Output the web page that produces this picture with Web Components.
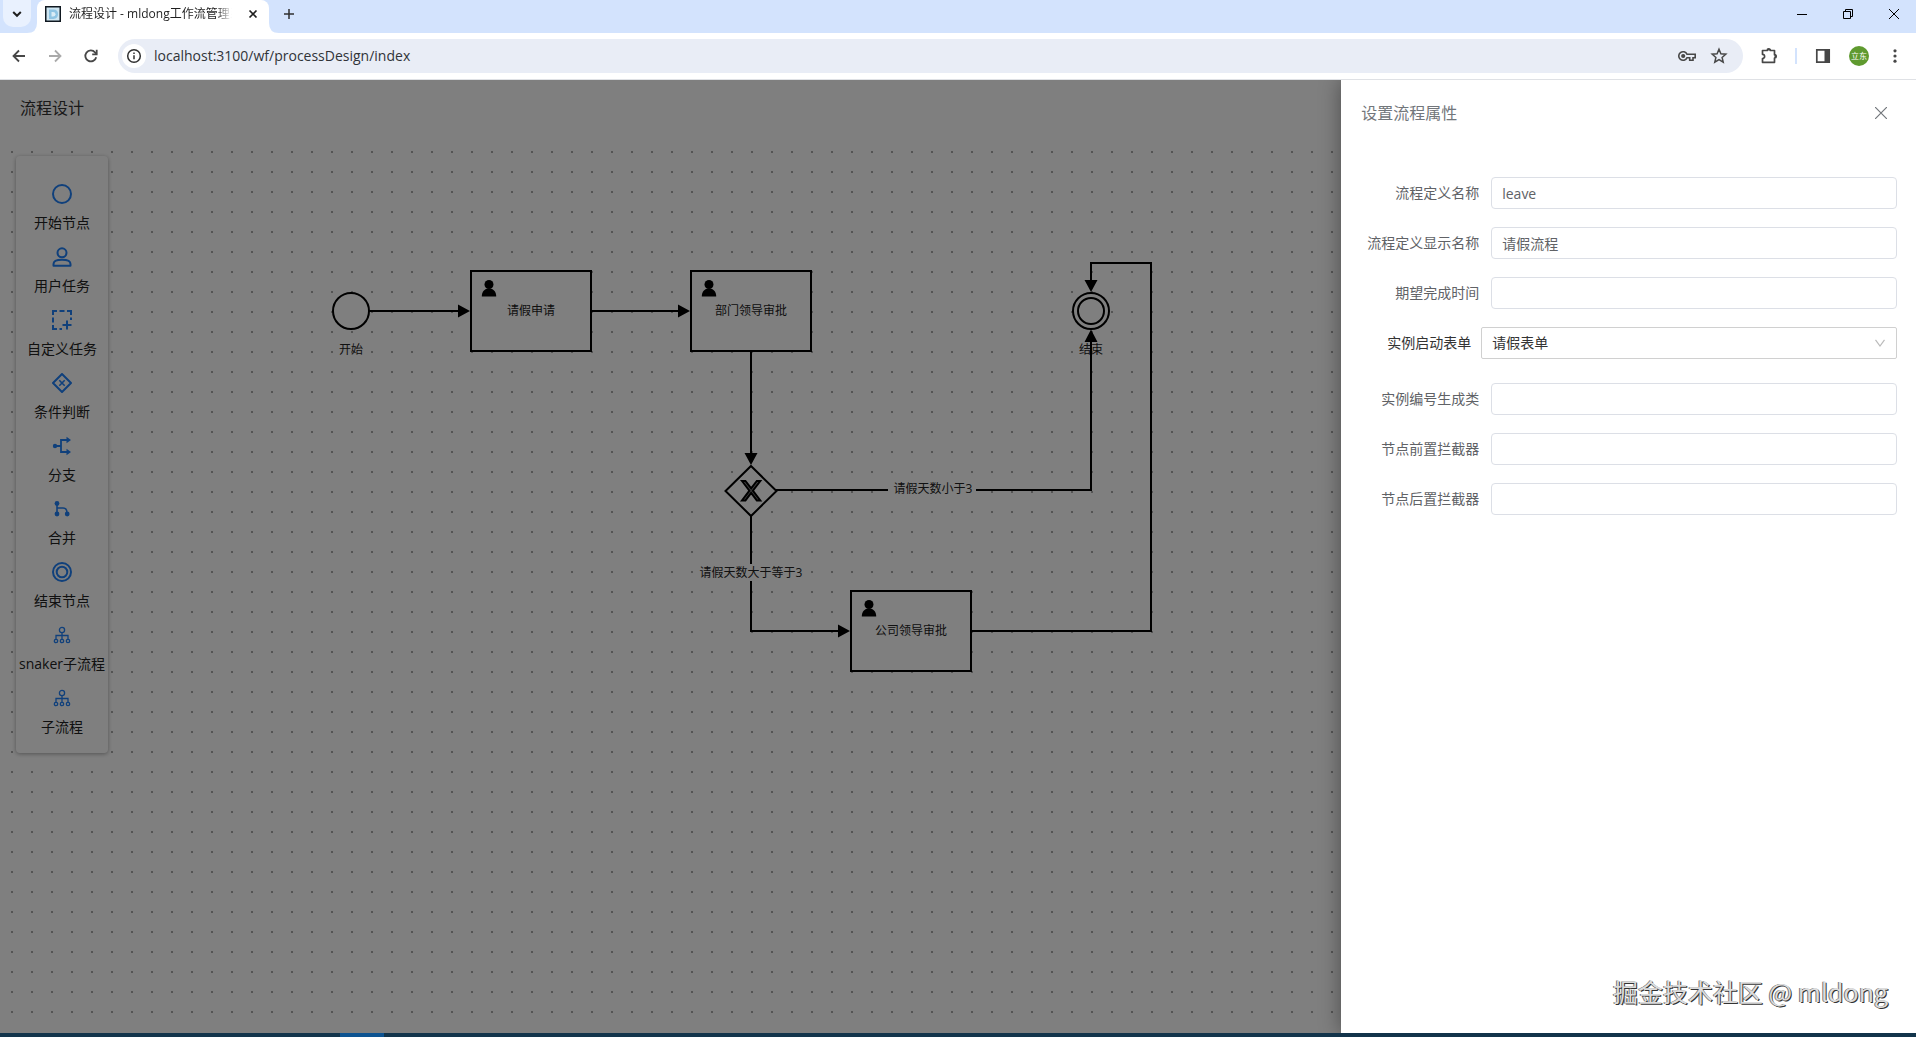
<!DOCTYPE html>
<html lang="zh-CN">
<head>
<meta charset="utf-8">
<title>流程设计 - mldong工作流管理</title>
<style>
html, body { height: 100%; margin: 0; }
body { font-family: "Open Sans", "Noto Sans CJK SC", sans-serif; font-size: 14px; color: #000; overflow: hidden; }
</style>
</head>
<body>
<app-window>
  <browser-tabs slot="tabs">流程设计 - mldong工作流管理系统</browser-tabs>
  <browser-toolbar slot="toolbar" url="localhost:3100/wf/processDesign/index"></browser-toolbar>
  <flow-designer heading="流程设计">
    <flow-canvas></flow-canvas>
    <node-palette slot="palette">
      <palette-item icon="start">开始节点</palette-item>
      <palette-item icon="user">用户任务</palette-item>
      <palette-item icon="custom">自定义任务</palette-item>
      <palette-item icon="decision">条件判断</palette-item>
      <palette-item icon="fork">分支</palette-item>
      <palette-item icon="join">合并</palette-item>
      <palette-item icon="end">结束节点</palette-item>
      <palette-item icon="tree">snaker子流程</palette-item>
      <palette-item icon="tree">子流程</palette-item>
    </node-palette>
  </flow-designer>
  <property-drawer slot="drawer" heading="设置流程属性">
    <form-field label="流程定义名称" value="leave"></form-field>
    <form-field label="流程定义显示名称" value="请假流程"></form-field>
    <form-field label="期望完成时间"></form-field>
    <form-field label="实例启动表单" value="请假表单" type="select"></form-field>
    <form-field label="实例编号生成类"></form-field>
    <form-field label="节点前置拦截器"></form-field>
    <form-field label="节点后置拦截器"></form-field>
  </property-drawer>
  <water-mark slot="drawer">掘金技术社区 @ mldong</water-mark>
  <task-bar slot="taskbar"></task-bar>
</app-window>

<script>
const RESET = `
  *, *::before, *::after { box-sizing: border-box; }
  button { border: 0; padding: 0; margin: 0; background: none; color: inherit; font: inherit; display: flex; align-items: center; justify-content: center; }
  svg { display: block; flex: none; }
`;

function define(name, render) {
  customElements.define(name, class extends HTMLElement {
    constructor() {
      super();
      this.attachShadow({ mode: 'open' });
    }
    connectedCallback() {
      const t = document.createElement('template');
      t.innerHTML = render(this);
      this.shadowRoot.replaceChildren(t.content.cloneNode(true));
    }
  });
}

define('app-window', () => `
  <style>${RESET}
    :host { display: flex; flex-direction: column; height: 100vh; background: #fff; }
    main { flex: 1; min-height: 0; position: relative; display: flex; overflow: hidden; border-top: 1px solid #dfe1e5; }
    .mask { position: absolute; inset: 0; background: rgba(0,0,0,.5); }
  </style>
  <slot name="tabs"></slot>
  <slot name="toolbar"></slot>
  <main>
    <slot></slot>
    <div class="mask"></div>
    <slot name="drawer"></slot>
  </main>
  <slot name="taskbar"></slot>`);

define('browser-tabs', () => `
  <style>${RESET}
    :host { display: flex; height: 33px; background: #d3e3fd; color: #1f1f1f; font-size: 12px; }
    .search { width: 28px; height: 27px; margin: 0 -4px 0 3px; background: #e9f1fe; border-radius: 0 0 10px 10px; }
    .foot { width: 10px; align-self: flex-end; }
    .tab { display: flex; align-items: center; width: 232px; padding: 0 8px 6px 8px; background: #fff; border-radius: 8px 8px 0 0; }
    .name { flex: 1; margin: 0 8px; overflow: hidden; white-space: nowrap; line-height: 20px;
      -webkit-mask-image: linear-gradient(90deg, #000 88%, transparent 97%); mask-image: linear-gradient(90deg, #000 88%, transparent 97%); }
    .close { width: 16px; height: 16px; }
    .plus { width: 28px; height: 27px; margin-left: -4px; }
    .controls { margin: 0 -1px 0 auto; display: flex; }
    .controls button { width: 46px; height: 27px; }
  </style>
  <button class="search" aria-label="搜索标签页"><svg width="10" height="10" viewBox="0 0 10 10" fill="none" stroke="#1f1f1f" stroke-width="2"><path d="M1.2 3 5 6.8 8.8 3"/></svg></button>
  <svg class="foot" width="10" height="10" viewBox="0 0 10 10"><path d="M10 0v10H0Q10 10 10 0Z" fill="#fff"/></svg>
  <div class="tab">
    <svg width="16" height="16" viewBox="0 0 16 16"><path d="M0 0h16v16H0z" fill="#101820"/><path d="M1.5 1.5h13v13h-13z" fill="#cfe6f2"/><path d="M4 3.500h4.500q4.500 0 4.500 4.500t-4.500 5H4z" fill="#8fc4e3"/><path d="M6.500 6h1.500q2.500 0 2.500 2.200t-2.500 2.300h-1.500z" fill="#d9ecf6"/></svg>
    <span class="name"><slot></slot></span>
    <button class="close" aria-label="关闭标签页"><svg width="10" height="10" viewBox="0 0 10 10" stroke="#1f1f1f" stroke-width="1.700"><path d="M1.500 1.500 8.500 8.500M8.500 1.500 1.500 8.500"/></svg></button>
  </div>
  <svg class="foot" width="10" height="10" viewBox="0 0 10 10"><path d="M0 0v10H10Q0 10 0 0Z" fill="#fff"/></svg>
  <button class="plus" aria-label="新标签页"><svg width="10" height="10" viewBox="0 0 10 10" stroke="#303030" stroke-width="1.500"><path d="M5 0v10M0 5h10"/></svg></button>
  <div class="controls">
    <button aria-label="最小化"><svg width="10" height="10" stroke="#000"><path d="M0 5.500h10"/></svg></button>
    <button aria-label="还原"><svg width="10" height="10" fill="none" stroke="#000"><path d="M.5 2.500h7v7h-7zM2.500 2.500v-2h7v7h-2"/></svg></button>
    <button aria-label="关闭"><svg width="10" height="10" stroke="#000"><path d="M0 0 10 10M10 0 0 10"/></svg></button>
  </div>`);

define('browser-toolbar', el => `
  <style>${RESET}
    :host { display: flex; align-items: center; height: 46px; padding: 0 3px 0 1px; color: #474747; }
    button { width: 36px; height: 34px; }
    .omni { flex: 1; display: flex; align-items: center; height: 34px; margin: 0 8px 0 9px; padding: 0 8px 0 4px; border-radius: 17px; background: #e9edf6; }
    .info { width: 24px; height: 24px; border-radius: 12px; background: #fff; color: #303030; }
    input { flex: 1; min-width: 0; margin-left: 8px; border: 0; padding: 0; outline: 0; background: none; font: inherit; font-size: 14px; line-height: 20px; color: #303338; }
    .omni .tool { width: 32px; }
    .sep { width: 2px; height: 16px; margin: 0 8px; background: #d3e3fd; }
    .avatar span { width: 20px; height: 20px; border-radius: 10px; background: #5f9a2f; color: #fff; font-size: 8px; line-height: 20px; }
  </style>
  <button aria-label="后退"><svg width="16" height="16" viewBox="0 0 16 16" fill="none" stroke="currentColor" stroke-width="1.800"><path d="M14 8H3M8 2.500 2.500 8 8 13.500"/></svg></button>
  <button aria-label="前进"><svg width="16" height="16" viewBox="0 0 16 16" fill="none" stroke="#aaa" stroke-width="1.800"><path d="M2 8H13M8 2.500 13.500 8 8 13.500"/></svg></button>
  <button aria-label="重新加载"><svg width="16" height="16" viewBox="0 0 16 16" fill="none" stroke="currentColor" stroke-width="1.800"><path d="M13.200 9.200A5.500 5.500 0 1 1 12 4.300L13.600 6"/><path d="M13.700 1.800V6.300H9.200"/></svg></button>
  <div class="omni">
    <button class="info" aria-label="网站信息"><svg width="16" height="16" viewBox="0 0 16 16" fill="none" stroke="currentColor" stroke-width="1.500"><circle cx="8" cy="8" r="6.300"/><path d="M8 7.300v4M8 4.500v1.600"/></svg></button>
    <input type="text" aria-label="地址" value="${el.getAttribute('url')}">
    <button class="tool" aria-label="密码"><svg width="20" height="16" viewBox="0 0 20 16" fill="none" stroke="currentColor" stroke-width="1.600"><path d="M10 6.300A4.300 4.300 0 1 0 10 9.700H12.700V12.300H16V9.700H18.200V6.300Z"/><circle cx="6.200" cy="8" r="1.300" fill="currentColor"/></svg></button>
    <button class="tool" aria-label="收藏"><svg width="18" height="18" viewBox="0 0 18 18" fill="none" stroke="currentColor" stroke-width="1.500"><path d="m9 2.300 1.900 4.500 4.900.4-3.700 3.200 1.100 4.800L9 12.600l-4.200 2.600 1.100-4.800L2.200 7.200l4.900-.4z"/></svg></button>
  </div>
  <button aria-label="扩展程序"><svg width="18" height="18" viewBox="0 0 18 18"><path d="M2.500 3.500H7.200A1.600 1.600 0 0 1 10.400 3.500H14.500V7.700A1.600 1.600 0 0 1 14.500 11V15.300H2.500V11.500A2.100 2.100 0 0 0 2.500 7.300Z" fill="none" stroke="currentColor" stroke-width="1.700" stroke-linejoin="round"/><path d="M7 3.500a1.800 1.800 0 0 1 3.600 0zM14.500 7.500a1.800 1.800 0 0 1 0 3.600z" fill="currentColor"/></svg></button>
  <span class="sep"></span>
  <button aria-label="侧边栏"><svg width="16" height="16" viewBox="0 0 16 16"><path d="M1.800 1.800h12.400v12.400H1.800z" fill="none" stroke="currentColor" stroke-width="1.700"/><path d="M9.500 1.500h5v13h-5z" fill="currentColor"/></svg></button>
  <button class="avatar" aria-label="用户"><span>立东</span></button>
  <button aria-label="更多"><svg width="4" height="16" viewBox="0 0 4 16" fill="currentColor"><circle cx="2" cy="2.800" r="1.600"/><circle cx="2" cy="8" r="1.600"/><circle cx="2" cy="13.200" r="1.600"/></svg></button>`);

define('flow-designer', el => `
  <style>${RESET}
    :host { flex: 1; display: flex; flex-direction: column; min-width: 0; }
    h1 { margin: 0; padding: 16px 20px 20px; font-size: 16px; font-weight: 400; line-height: 24px; color: #333; }
    .stage { position: relative; flex: 1; min-height: 0; display: flex; margin-bottom: 4px; }
    .float { position: absolute; left: 16px; top: 16px; }
  </style>
  <h1>${el.getAttribute('heading')}</h1>
  <div class="stage"><slot></slot><div class="float"><slot name="palette"></slot></div></div>`);

const person = (x, y) => `<g transform="translate(${x} ${y})"><circle cx="18" cy="13.500" r="4.500"/><path d="M10.800 25.500C10.800 20.500 13.500 18.500 16 17.800H20C22.500 18.500 25.200 20.500 25.200 25.500Z"/></g>`;
const task = (x, y, name) => `<rect class="shape" x="${x}" y="${y}" width="120" height="80"/>${person(x, y)}<text x="${x + 60}" y="${y + 44}">${name}</text>`;

define('flow-canvas', () => `
  <style>${RESET}
    :host { display: flex; flex: 1; min-width: 0; }
    svg { width: 100%; height: 100%; font-size: 12px; }
    text { text-anchor: middle; fill: #222; }
    .shape { fill: #fff; stroke: #000; stroke-width: 2; }
    .edge { fill: none; stroke: #000; stroke-width: 2; }
    .tag { fill: #fff; }
  </style>
  <svg role="img" aria-label="流程图">
    <defs><pattern id="dots" x="2" y="2" width="20" height="20" patternUnits="userSpaceOnUse"><circle cx="10" cy="10" r="1" fill="#8c8c8c"/></pattern></defs>
    <rect width="100%" height="100%" fill="url(#dots)"/>
    <circle class="shape" cx="351" cy="171" r="18"/><text x="351" y="214">开始</text>
    ${task(471, 131, '请假申请')}
    ${task(691, 131, '部门领导审批')}
    ${task(851, 451, '公司领导审批')}
    <path class="shape" d="M751 326 776.500 351 751 376 725.500 351Z"/>
    <path transform="translate(726 326)" d="m16 15 7.430 9.710-7.430 9.710h3.430l5.710-7.460 5.710 7.460h3.430l-7.430-9.710 7.430-9.710h-3.430l-5.710 7.460-5.710-7.460z" fill="#888" stroke="#000" stroke-width="2"/>
    <circle class="shape" cx="1091" cy="171" r="18"/><circle class="shape" cx="1091" cy="171" r="13"/>
    <text x="1091" y="214">结束</text>
    <path class="edge" d="M369 171H459M591 171H679M751 211V315M776 350H1091V200M751 376V491H839M971 491H1151V123H1091V142"/>
    <path d="M470 171l-12-6.500v13zM690 171l-12-6.500v13zM751 325l-6.500-12h13zM850 491l-12-6.500v13zM1091 152l-6.500-12h13zM1091 189.500l-6.500 12.500h13z"/>
    <rect class="tag" x="888" y="341" width="88" height="17"/><text x="933" y="353">请假天数小于3</text>
    <rect class="tag" x="698" y="424" width="106" height="17"/><text x="751" y="437">请假天数大于等于3</text>
  </svg>`);

define('node-palette', () => `
  <style>${RESET}
    :host { display: flex; flex-direction: column; gap: 13px; width: 92px; padding: 28px 0 15px; background: #fff; border-radius: 4px; box-shadow: 0 1px 4px rgba(0,0,0,.35); }
  </style><slot></slot>`);

const icons = {
  start: '<circle cx="10" cy="10" r="9"/>',
  user: '<circle cx="10" cy="5.800" r="4.500"/><path d="M1.500 18.800V17C1.500 14 5 12.800 10 12.800S18.500 14 18.500 17V18.800Z" stroke-linejoin="round"/>',
  custom: '<path d="M1 5V1H5M7.500 1H12.500M15 1H19V5M19 7.500V10M1 7.500V12.500M1 15V19H5M7.500 19H10M10.500 15H19.500M15 10.500V19.500"/>',
  decision: '<path d="M10 1 19 10 10 19 1 10Z" stroke-linejoin="round"/><path d="M7.300 7.300 12.700 12.700M12.700 7.300 7.300 12.700" stroke-width="1.600"/>',
  fork: '<circle cx="3" cy="10" r="2.200" fill="currentColor" stroke="none"/><path d="M3 10H9M17 4H9V16H17" stroke-width="1.800"/><path d="M14.500 0.800 19 4 14.500 7.200ZM14.500 12.800 19 16 14.500 19.200Z" fill="currentColor" stroke="none"/>',
  join: '<g fill="currentColor" stroke="none"><circle cx="5" cy="4.500" r="2.400"/><circle cx="5" cy="15" r="2.400"/><circle cx="15.200" cy="15" r="2.400"/></g><path d="M5 4V15M5 9H11Q15 9 15 14" stroke-width="1.600"/>',
  end: '<circle cx="10" cy="10" r="9"/><circle cx="10" cy="10" r="5.300"/>',
  tree: '<g stroke-width="1.300"><circle cx="10" cy="5" r="2.600"/><circle cx="4" cy="16" r="1.700"/><circle cx="10" cy="16" r="1.700"/><circle cx="16" cy="16" r="1.700"/><path d="M10 7.600V14.300M4 14.300V10.500H16V14.300"/></g>'
};

define('palette-item', el => `
  <style>${RESET}
    :host { display: block; }
    button { width: 100%; flex-direction: column; gap: 8px; font-size: 14px; line-height: 22px; white-space: nowrap; color: #222; }
    svg { color: #2080f7; }
  </style>
  <button><svg width="20" height="20" viewBox="0 0 20 20" fill="none" stroke="currentColor" stroke-width="2">${icons[el.getAttribute('icon')]}</svg><span><slot></slot></span></button>`);

define('property-drawer', el => `
  <style>${RESET}
    :host { position: absolute; inset: 0 0 0 auto; width: 30%; display: flex; flex-direction: column; background: #fff; box-shadow: 0 0 20px rgba(0,0,0,.4); }
    header { display: flex; align-items: center; justify-content: space-between; padding: 21px 20px; color: #72767b; }
    h2 { margin: 0; font-size: 16px; font-weight: 400; line-height: 24px; }
    header button { width: 30px; height: 24px; }
    form { display: flex; flex-direction: column; gap: 18px; padding: 31px 19px 31px 20px; }
  </style>
  <header><h2>${el.getAttribute('heading')}</h2><button aria-label="关闭"><svg width="12" height="12" stroke="#72767b" stroke-width="1.200"><path d="M0 0 12 12M12 0 0 12"/></svg></button></header>
  <form><slot></slot></form>`);

define('form-field', el => {
  const value = el.getAttribute('value') || '';
  const select = el.getAttribute('type') === 'select';
  return `
  <style>${RESET}
    :host { display: flex; line-height: 32px; }
    :host([type="select"]) { margin-bottom: 6px; }
    label { width: 130px; padding-right: 12px; text-align: right; font-size: 14px; color: #606266; white-space: nowrap; }
    input, .box { flex: 1; min-width: 0; height: 32px; }
    input, select { border: 1px solid #dcdfe6; border-radius: 4px; padding: 0 10px; background: #fff; font: inherit; font-size: 14px; line-height: 20px; color: #606266; outline: 0; }
    :host([type="select"]) label { width: 120px; padding-right: 10px; color: #333; }
    .box { display: grid; align-items: center; }
    select { grid-area: 1 / 1; width: 100%; height: 32px; appearance: none; border-color: #d0d0d0; border-radius: 2px; color: #333; }
    svg { grid-area: 1 / 1; justify-self: end; margin-right: 11px; pointer-events: none; }
  </style>
  <label for="f">${el.getAttribute('label')}</label>
  ${select
    ? `<div class="box"><select id="f"><option>${value}</option></select><svg width="12" height="12" viewBox="0 0 12 12" fill="none" stroke="#bbb" stroke-width="1.200"><path d="M1.500 2.800 6 9 10.500 2.800"/></svg></div>`
    : `<input id="f" type="text" value="${value}">`}`;
});

define('water-mark', () => `
  <style>
    :host { position: absolute; right: 28px; bottom: 23px; font-family: "Noto Sans CJK SC", sans-serif; font-size: 25px; line-height: 38px; color: #dcdcdc; text-shadow: 1px 1px 0 #333, -1px 0 0 #777; white-space: nowrap; }
  </style><slot></slot>`);

define('task-bar', () => `
  <style>
    :host { display: flex; height: 4px; background: #12344b; }
    i { margin-left: 340px; width: 44px; background: #0d5391; }
  </style><i></i>`);
</script>
</body>
</html>
